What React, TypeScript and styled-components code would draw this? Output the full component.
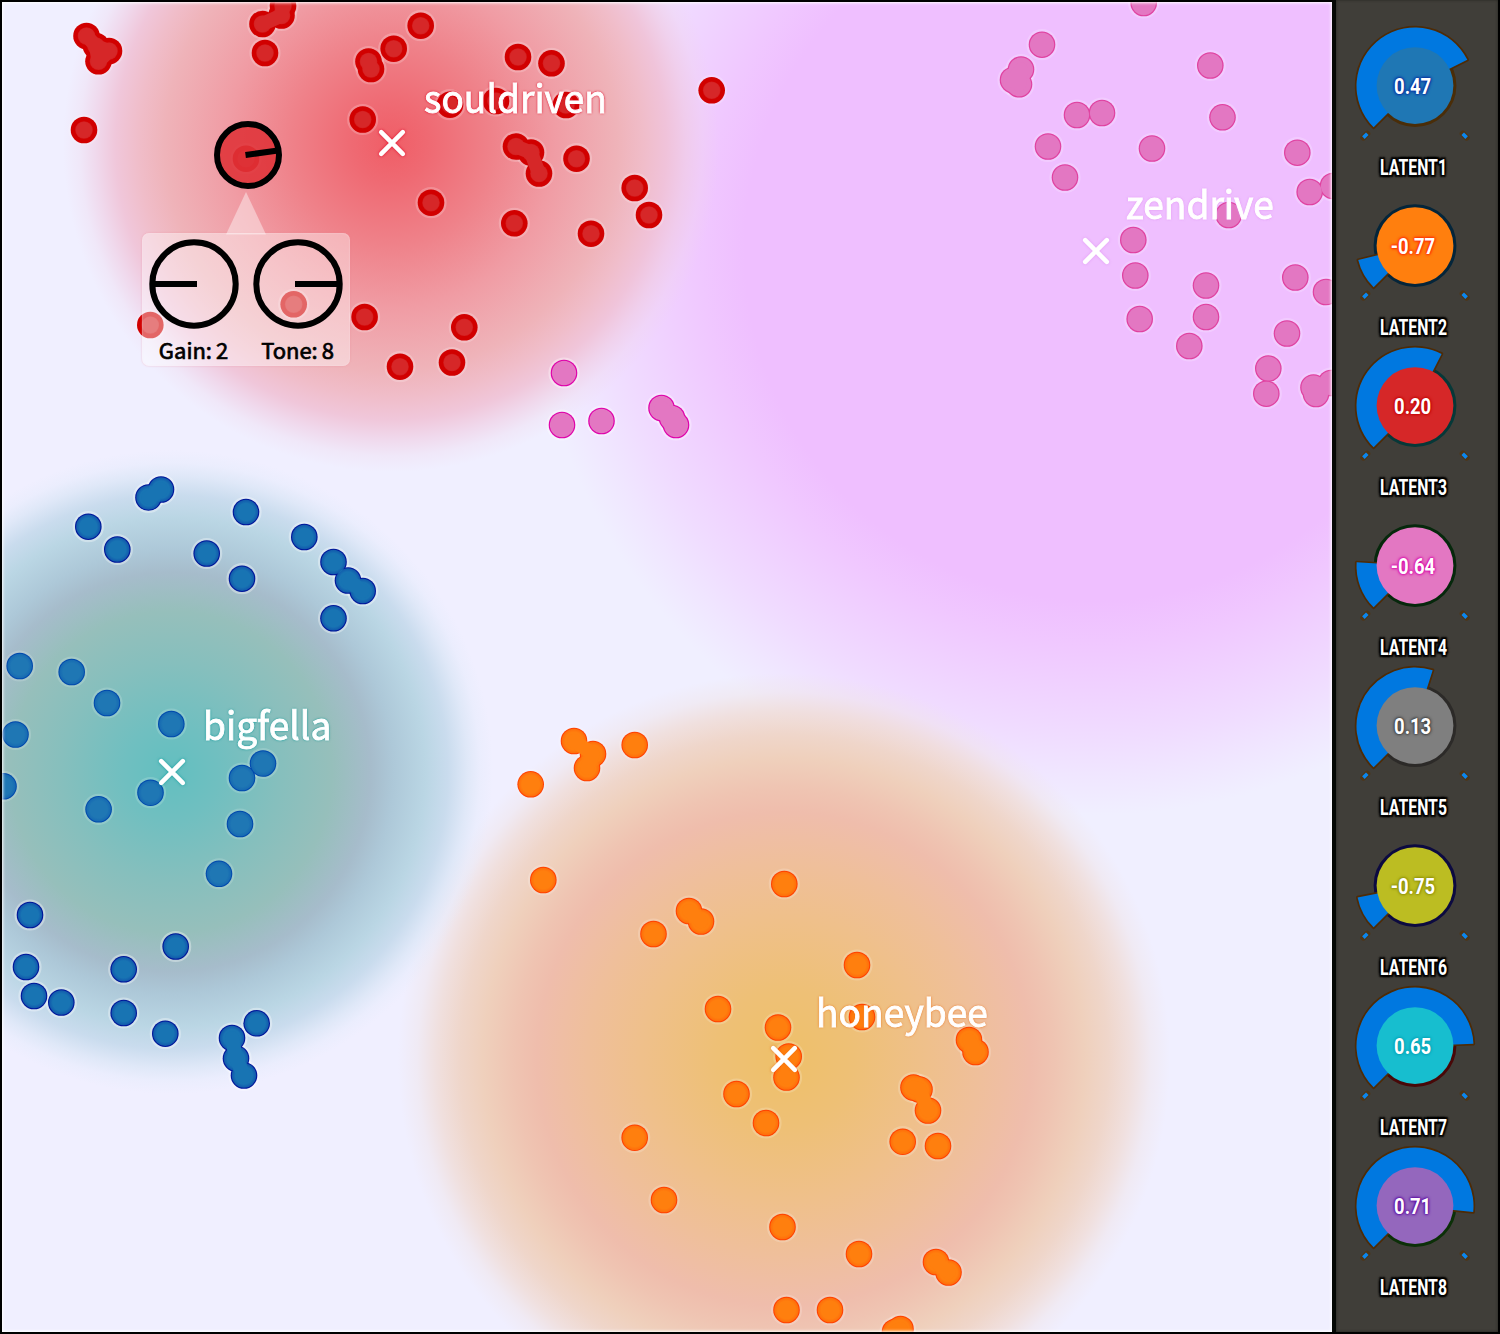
import React from "react";
import styled, { createGlobalStyle } from "styled-components";

const GlobalStyle = createGlobalStyle`
  html, body { margin: 0; padding: 0; background: #000; }
  * { box-sizing: border-box; }
`;

const sans = `"Noto Sans CJK JP", "Noto Sans", sans-serif`;

type Point = [number, number];
type Series = {
  name: string; edge: string; core: string; coreR: number; soft: number; halo: number; points: Point[];
};

const series: Series[] = [
  {
    name: "red", edge: "#d10000", core: "#d62728", coreR: 8.8, soft: 0.86, halo: 0.2,
    points: [
      [86.5, 36], [109, 51], [98.5, 61.3], [84, 130], [262.5, 24], [281.5, 15.5], [283, 6], [265, 53],
      [368.5, 61.5], [371, 69], [393.7, 48.7], [420.7, 25.7], [362.7, 119.5], [431, 202.7], [364.6, 317],
      [464.3, 327.3], [400, 366.7], [452, 362.5], [246, 158.7], [150.3, 325], [293.7, 304.3], [518, 57],
      [551.5, 63.3], [711.7, 90.3], [450, 104.7], [496, 101], [566, 105], [516, 146.5], [531, 152.5],
      [539, 173.5], [576.5, 158.7], [634.7, 188], [649, 215], [514.3, 223.3], [591, 233.7], [96, 46],
    ],
  },
  {
    name: "pink", edge: "#df00aa", core: "#e377c2", coreR: 12.2, soft: 0.96, halo: 0.34,
    points: [[564, 373], [562, 425], [601.5, 421], [661.5, 408], [672, 418], [676, 425]],
  },
  {
    name: "rose", edge: "#e0409f", core: "#e377c2", coreR: 12.2, soft: 0.94, halo: 0.2,
    points: [
      [1143.7, 3], [1042, 44.7], [1021, 69.5], [1013, 80], [1019, 84.3], [1210.3, 65.5], [1077, 115],
      [1102, 113], [1222.5, 117.3], [1048, 146.5], [1065, 177.5], [1152, 148.5], [1297.3, 152.7],
      [1309.7, 192], [1333, 186], [1228.7, 215], [1133.3, 240], [1135.3, 275.5], [1139.7, 319],
      [1206, 285.5], [1206, 317], [1189.3, 346], [1295.3, 277.5], [1326, 292], [1287, 333.5],
      [1268.3, 368.5], [1266.3, 393.7], [1313.5, 387.5], [1316, 394], [1331, 383],
    ],
  },
  {
    name: "navy", edge: "#00169a", core: "#1874b3", coreR: 12.2, soft: 0.7, halo: 0.34,
    points: [
      [161, 489.5], [148.5, 497.5], [88.3, 526.7], [117.3, 549.5], [246, 512], [206.7, 553.5], [242, 578.7],
      [304.3, 537], [333.5, 562], [348, 580.5], [362.7, 591], [333.5, 618.3], [30, 915], [26, 967],
      [34, 996], [61.3, 1002.5], [123.7, 969.3], [175.7, 946.5], [123.7, 1013], [165.3, 1033.7],
      [256.7, 1023.3], [232, 1038], [236, 1058.5], [244, 1075.5],
    ],
  },
  {
    name: "blue", edge: "#0048ad", core: "#1f77b4", coreR: 12.3, soft: 0.7, halo: 0.16,
    points: [
      [19.7, 666], [71.7, 672], [107, 703], [171.3, 724], [15.5, 734.5], [3.5, 786.3], [98.6, 809.3],
      [150.5, 792.7], [242, 778], [263, 763.5], [240, 824], [219, 873.8],
    ],
  },
  {
    name: "orange", edge: "#ff4000", core: "#ff7f0e", coreR: 12.3, soft: 0.72, halo: 0.18,
    points: [
      [574, 741], [593, 754], [587, 768], [634.7, 745], [530.7, 784.3], [543.3, 880], [784.3, 884],
      [689, 911], [701, 921.5], [653.5, 934], [857, 965], [718, 1009], [778, 1027.5], [862, 1017],
      [788.7, 1056.5], [786.5, 1077.5], [736.5, 1094], [766, 1123], [634.7, 1137.7], [664, 1200],
      [782.5, 1227], [859, 1254], [936, 1262], [948.5, 1272.5], [786.5, 1310], [830, 1310],
      [900.5, 1329], [895, 1332], [969, 1040], [975.5, 1052], [913.5, 1087.5], [919.5, 1089.5],
      [928, 1110.5], [902.7, 1141.7], [938, 1146],
    ],
  },
];

const clusters = [
  { name: "souldriven", x: 391.5, y: 142.5, dx: -1, dy: 0, glow: "rgba(225,0,35,.9)" },
  { name: "zendrive", x: 1095.8, y: 250.5, dx: -3, dy: -1.5, glow: "rgba(222,140,240,.7)" },
  { name: "bigfella", x: 171.5, y: 772, dx: -1.2, dy: -2, glow: "rgba(0,150,150,.8)" },
  { name: "honeybee", x: 784.3, y: 1058.5, dx: -1.2, dy: -1.5, glow: "rgba(235,110,20,.75)" },
];

const latents = [
  { value: 0.47, color: "#1f77b4", halo: "#4a2d08", glow: "#0029a0" },
  { value: -0.77, color: "#ff7f0e", halo: "#04253a", glow: "#ff2000" },
  { value: 0.2, color: "#d62728", halo: "#063838", glow: "#c40000" },
  { value: -0.64, color: "#e377c2", halo: "#06280c", glow: "#d800a8" },
  { value: 0.13, color: "#7f7f7f", halo: "#2c2a28", glow: "#3c3c3c" },
  { value: -0.75, color: "#bcbd22", halo: "#0c0a40", glow: "#8a8c00" },
  { value: 0.65, color: "#17becf", halo: "#480808", glow: "#00a2b4" },
  { value: 0.71, color: "#9467bd", halo: "#0c3008", glow: "#5800a0" },
];

const Frame = styled.main`
  display: grid;
  grid-template-columns: 1332px 168px;
  width: 1500px;
  height: 1334px;
  overflow: hidden;
  background: #000;
`;

const Plot = styled.section`
  position: relative;
  overflow: hidden;
  margin: 2px 0 2px 2px;
  background:
    radial-gradient(circle 328px at 389px 142px,
      #f05d66 0, #ef6a73 12%, #ef828a 31%, #f09ca4 50%, #efb3b9 69%, rgba(240,188,200,.98) 77%,
      rgba(240,192,212,.86) 84%, rgba(240,202,224,.6) 90%, rgba(240,212,232,.28) 95%, rgba(240,230,250,0) 100%),
    radial-gradient(circle 322px at 169px 770px,
      #62bfc0 0, #70bfc0 15%, #86bfbd 34%, #96bfbb 50%, #a6bccb 62%, #adc8d8 69%, #bad6e4 79%,
      rgba(198,218,236,.92) 86%, rgba(214,228,244,.64) 92%, rgba(225,234,250,.34) 96%, rgba(240,240,255,0) 100%),
    radial-gradient(circle 386px at 782px 1057px,
      #eec069 0, #eec076 18%, #efc08b 37%, #efbf9b 51%, #efbdac 64%, #efc4b2 70%, #efd0bc 78%,
      rgba(239,212,198,.93) 84%, rgba(240,218,210,.72) 90%, rgba(240,226,226,.38) 95%, rgba(240,240,255,0) 100%),
    radial-gradient(circle 565px at 1093px 248px,
      #efbfff 0, #efbfff 62%, #f0c8ff 70%, #f0d2ff 78%, #f0dcff 86%, #f0e6ff 93%, #f0efff 100%);
  background-color: #f0efff;
  &::after {
    content: "";
    position: absolute;
    inset: 0;
    box-shadow: inset 0 0 3px 1px rgba(255, 255, 255, 0.95);
    pointer-events: none;
  }
`;

const Scatter = styled.svg`
  display: block;
  width: 1330px;
  height: 1330px;
`;

const Marker = styled.div`
  position: absolute;
  width: 0;
  height: 0;
`;

const Cross = styled.svg<{ $glow: string }>`
  position: absolute;
  left: -16px;
  top: -16px;
  width: 32px;
  height: 32px;
  filter: drop-shadow(0 0 1.5px ${(p) => p.$glow});
`;

const ClusterName = styled.span<{ $glow: string; $dx: number; $dy: number }>`
  position: absolute;
  left: ${(p) => 33 + p.$dx}px;
  top: ${(p) => -66 + p.$dy}px;
  font: 400 38px/40px ${sans};
  color: #fff;
  white-space: nowrap;
  transform: scaleX(0.977);
  transform-origin: 0 0;
  -webkit-text-stroke: 0.9px #fff;
  text-shadow: 0 0 3px ${(p) => p.$glow}, 0 0 2px ${(p) => p.$glow};
`;

const Cursor = styled.svg`
  position: absolute;
  left: 210px;
  top: 117px;
  width: 72px;
  height: 72px;
  filter: drop-shadow(0 0 1px rgba(255, 150, 165, 0.6));
`;

const Popover = styled.div`
  position: absolute;
  left: 140px;
  top: 231px;
  width: 208px;
  height: 132.5px;
  display: flex;
  gap: 14px;
  padding: 5.5px 7px 0;
  border-radius: 7px;
  background: rgba(255, 255, 255, 0.4);
  box-shadow: 0 0 2px rgba(240, 130, 145, 0.45), inset 0 0 2px rgba(255, 235, 240, 0.6);
  &::before {
    content: "";
    position: absolute;
    left: 84px;
    top: -41px;
    width: 40px;
    height: 42.5px;
    clip-path: polygon(50% 0, 100% 100%, 0 100%);
    background: rgba(255, 255, 255, 0.42);
  }
`;

const DialColumn = styled.div`
  display: flex;
  flex-direction: column;
  align-items: center;
  width: 90px;
  flex: none;
`;

const DialSvg = styled.svg`
  width: 90px;
  height: 90px;
  flex: none;
`;

const DialText = styled.span`
  margin-top: 6.5px;
  font: 400 22px/28px ${sans};
  white-space: pre;
  color: #000;
  word-spacing: -1px;
  transform: translateX(-0.5px);
  -webkit-text-stroke: 0.7px #000;
`;

const Sidebar = styled.aside`
  display: flex;
  flex-direction: column;
  padding-top: 6px;
  margin: 0 2px 2px 0;
  border-left: 4px solid #050805;
  background: #403e39;
  box-shadow: inset 0 0 3px #24241f;
`;

const KnobRow = styled.div`
  display: flex;
  flex-direction: column;
  align-items: center;
  width: 158px;
  height: 160px;
  flex: none;
`;

const KnobFace = styled.div`
  display: grid;
  place-items: center;
  width: 156px;
  height: 148px;
  flex: none;
  & > * { grid-area: 1 / 1; }
`;

const KnobSvg = styled.svg`
  width: 156px;
  height: 160px;
`;

const KnobValue = styled.span<{ $glow: string }>`
  font: 700 22px/24px Roboto, sans-serif;
  color: #fff;
  transform: translate(-2.5px, 1px) scaleX(0.84);
  text-shadow: 0 0 2px ${(p) => p.$glow}, 0 0 3px ${(p) => p.$glow}, 0 0 4px ${(p) => p.$glow};
`;

const KnobLabel = styled.span`
  font: 700 22px/26px Roboto, sans-serif;
  height: 26px;
  color: #fff;
  white-space: nowrap;
  transform: translate(-1px, 1px) scaleX(0.72);
  text-shadow: 0 0 2px #000, 0 0 2px #000, 0 0 3px #000, 0 0 3px #000, 2px 2px 2px #000, -2px -2px 2px #000,
    2px -2px 2px #000, -2px 2px 2px #000;
`;

function polar(r: number, deg: number): string {
  const a = (deg * Math.PI) / 180;
  return `${(78 + r * Math.sin(a)).toFixed(2)} ${(80 - r * Math.cos(a)).toFixed(2)}`;
}

function arcPath(value: number): string {
  const end = value * 135;
  const large = end + 135 > 180 ? 1 : 0;
  return `M${polar(34, -135)} L${polar(58.5, -135)} A58.5 58.5 0 ${large} 1 ${polar(58.5, end)} L${polar(34, end)} Z`;
}

const tickPath = `M${polar(67.5, -135)} L${polar(73, -135)} M${polar(67.5, 135)} L${polar(73, 135)}`;

function Knob({ index }: { index: number }) {
  const { value, color, halo, glow } = latents[index];
  return (
    <KnobRow>
      <KnobFace>
        <KnobSvg viewBox="0 0 156 160">
          <circle cx="78" cy="79.6" r="39.4" fill="none" stroke={halo} strokeWidth="4" />
          <path d={arcPath(value)} fill="#0078e0" stroke="#4e2b06" strokeWidth="3.4" paintOrder="stroke" strokeLinejoin="round" />
          <circle cx="78" cy="79.6" r="38.4" fill={color} />
          <path d={tickPath} stroke="#4e3516" strokeWidth="6" strokeLinecap="round" />
          <path d={tickPath} stroke="#0a86ee" strokeWidth="3.6" />
        </KnobSvg>
        <KnobValue $glow={glow}>{value.toFixed(2)}</KnobValue>
      </KnobFace>
      <KnobLabel>{`LATENT${index + 1}`}</KnobLabel>
    </KnobRow>
  );
}

function Dial({ label, toRight }: { label: string; toRight?: boolean }) {
  return (
    <DialColumn>
      <DialSvg viewBox="0 0 90 90">
        <circle cx="45" cy="45" r="41.7" fill="none" stroke="#000" strokeWidth="6" />
        <path d={toRight ? "M42 45H86" : "M48 45H4"} stroke="#000" strokeWidth="5.8" />
      </DialSvg>
      <DialText>{label}</DialText>
    </DialColumn>
  );
}

/** Joins the fills of points that overlap, so that a cluster reads as one blob. */
function bridges(points: Point[]): string {
  const parts: string[] = [];
  points.forEach(([ax, ay], i) => {
    points.slice(i + 1).forEach(([bx, by]) => {
      if (Math.hypot(ax - bx, ay - by) < 23.5) parts.push(`M${ax} ${ay}L${bx} ${by}`);
    });
  });
  return parts.join("");
}

export default function App() {
  return (
    <>
      <GlobalStyle />
      <Frame>
        <Plot>
          <Scatter viewBox="2 2 1330 1330">
            <defs>
              {series.map((s) => (
                <radialGradient key={s.name} id={`core-${s.name}`}>
                  <stop offset={s.soft} stopColor={s.core} />
                  <stop offset="1" stopColor={s.core} stopOpacity="0.7" />
                </radialGradient>
              ))}
            </defs>
            {series.map((s) => (
              <g key={s.name}>
                {s.points.map(([x, y], i) => <circle key={`h${i}`} cx={x} cy={y} r="14.4" fill="none" stroke="#fff" strokeWidth="2.4" strokeOpacity={s.halo} />)}
                {s.points.map(([x, y], i) => <circle key={`e${i}`} cx={x} cy={y} r="13.3" fill={s.edge} />)}
                {s.points.map(([x, y], i) => <circle key={`c${i}`} cx={x} cy={y} r={s.coreR} fill={`url(#core-${s.name})`} />)}
                <path d={bridges(s.points)} stroke={s.core} strokeWidth="14" fill="none" strokeLinecap="round" />
              </g>
            ))}
          </Scatter>
          {clusters.map((c) => (
            <Marker key={c.name} style={{ left: c.x - 2, top: c.y - 2 }}>
              <Cross $glow={c.glow} viewBox="-16 -16 32 32">
                <path d="M-10.8 -10.8L10.8 10.8M10.8 -10.8L-10.8 10.8" stroke="#fff" strokeWidth="4.6" strokeLinecap="round" />
              </Cross>
              <ClusterName $glow={c.glow} $dx={c.dx} $dy={c.dy}>{c.name}</ClusterName>
            </Marker>
          ))}
          <Cursor viewBox="0 0 72 72">
            <circle cx="36" cy="36" r="31" fill="rgba(219,38,42,.78)" stroke="#000" strokeWidth="6" />
            <path d="M33.5 36L66 31.5" stroke="#000" strokeWidth="6" />
          </Cursor>
          <Popover>
            <Dial label="Gain: 2" />
            <Dial label="Tone: 8" toRight />
          </Popover>
        </Plot>
        <Sidebar>
          {latents.map((_, i) => <Knob key={i} index={i} />)}
        </Sidebar>
      </Frame>
    </>
  );
}
